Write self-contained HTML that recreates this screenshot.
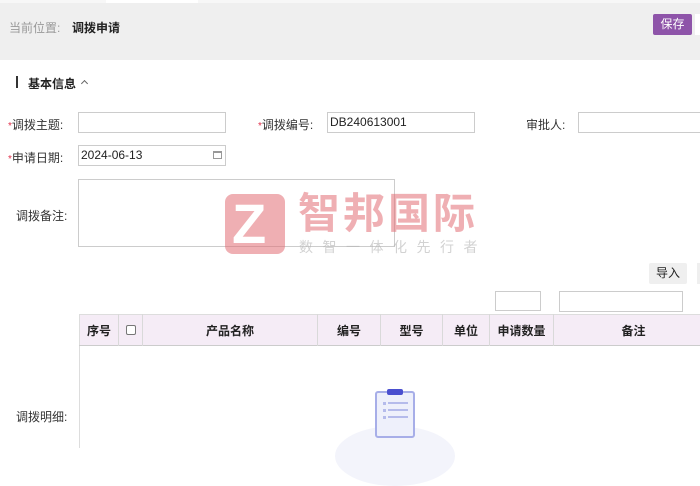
<!DOCTYPE html>
<html><head><meta charset="utf-8"><style>
*{margin:0;padding:0;box-sizing:border-box}
body{width:700px;height:448px;overflow:hidden;background:#fff;font-family:"Liberation Sans","Noto Sans CJK SC",sans-serif;font-size:12px;color:#333;position:relative}
.a{position:absolute}
.inp{position:absolute;border:1px solid #ccc;background:#fff;height:21px}
.lbl{position:absolute;font-size:12px;color:#333}
.star{color:#e0304a;font-size:10px}
table{table-layout:fixed}
th{font-weight:bold;font-size:12px;color:#222;border-right:1px solid #d9d9d9;height:31px;padding:0}
</style></head><body>
<div class="a" style="left:0;top:0;width:700px;height:60px;background:#efefef"></div>
<div class="a" style="left:0;top:0;width:700px;height:3px;background:#f7f7f7"></div>
<div class="a" style="left:106px;top:0;width:92px;height:3px;background:#fff"></div>
<div class="a" style="left:9px;top:19px;font-size:12px;color:#999">当前位置:</div>
<div class="a" style="left:72px;top:19px;font-size:12px;font-weight:bold;color:#222">调拨申请</div>
<div class="a" style="left:653px;top:14px;width:39px;height:21px;background:#8e54a9;border-radius:2px;color:#fff;text-align:center;line-height:21px;font-size:12px">保存</div>
<div class="a" style="left:695px;top:14px;width:5px;height:21px;background:#fff"></div>

<div class="a" style="left:16px;top:76px;width:2px;height:12px;background:#333"></div>
<div class="a" style="left:28px;top:75px;font-weight:bold;font-size:12px;color:#222">基本信息</div>
<div class="a" style="left:82px;top:81px;width:5px;height:5px;border-left:1px solid #666;border-top:1px solid #666;transform:rotate(45deg)"></div>

<div class="lbl" style="left:8px;top:116px"><span class="star">*</span>调拨主题:</div>
<div class="inp" style="left:78px;top:112px;width:148px"></div>
<div class="lbl" style="left:258px;top:116px"><span class="star">*</span>调拨编号:</div>
<div class="inp" style="left:327px;top:112px;width:148px;padding-left:2px;line-height:19px;font-size:12px;color:#222">DB240613001</div>
<div class="lbl" style="left:526px;top:116px">审批人:</div>
<div class="inp" style="left:578px;top:112px;width:130px"></div>

<div class="lbl" style="left:8px;top:149px"><span class="star">*</span>申请日期:</div>
<div class="inp" style="left:78px;top:145px;width:148px;padding-left:2px;line-height:19px;color:#222">2024-06-13</div>
<div class="a" style="left:213px;top:151px;width:9px;height:8px;border:1px solid #999;border-top-width:2px"></div>

<div class="lbl" style="left:16px;top:207px">调拨备注:</div>
<div class="inp" style="left:78px;top:179px;width:317px;height:68px"></div>

<div class="a" style="left:225px;top:194px;width:60px;height:60px;background:rgba(226,110,116,.55);border-radius:8px"></div>
<div class="a" style="left:232px;top:196px;font-size:56px;font-weight:bold;color:#fff;line-height:56px;font-family:'Liberation Sans',sans-serif">Z</div>
<div class="a" style="left:298px;top:190px;font-size:42px;font-weight:bold;color:rgba(226,110,116,.55);letter-spacing:3px;line-height:48px">智邦国际</div>
<div class="a" style="left:299px;top:239px;font-size:14px;color:rgba(180,180,180,.6);letter-spacing:9.5px;line-height:16px">数智一体化先行者</div>

<div class="a" style="left:649px;top:263px;width:38px;height:21px;background:#efefef;border-radius:2px;text-align:center;line-height:21px;color:#222">导入</div>
<div class="a" style="left:697px;top:263px;width:3px;height:21px;background:#efefef"></div>
<div class="inp" style="left:495px;top:291px;width:46px;height:20px"></div>
<div class="inp" style="left:559px;top:291px;width:124px;height:21px"></div>

<table class="a" style="left:79px;top:314px;width:634px;border-collapse:collapse;background:#f5ecf6;border-top:1px solid #ddd;border-bottom:1px solid #ccc;border-left:1px solid #ddd">
<colgroup><col style="width:39px"><col style="width:24px"><col style="width:175px"><col style="width:63px"><col style="width:62px"><col style="width:47px"><col style="width:64px"><col style="width:160px"></colgroup>
<tr>
<th>序号</th>
<th><div style="width:10px;height:10px;border:1px solid #777;border-radius:2px;margin:auto;background:#fff"></div></th>
<th>产品名称</th>
<th>编号</th>
<th>型号</th>
<th>单位</th>
<th>申请数量</th>
<th>备注</th>
</tr></table>
<div class="a" style="left:79px;top:346px;width:1px;height:102px;background:#ddd"></div>
<div class="lbl" style="left:16px;top:408px">调拨明细:</div>

<div class="a" style="left:335px;top:426px;width:120px;height:60px;border-radius:50%;background:#f3f4fb"></div>
<div class="a" style="left:375px;top:391px;width:40px;height:47px;background:#eef0fb;border:2px solid #a7aee8;border-radius:3px"></div>
<div class="a" style="left:387px;top:389px;width:16px;height:6px;background:#4a4fcf;border-radius:2px"></div>
<div class="a" style="left:383px;top:402px;width:3px;height:3px;background:#b5bbeb"></div>
<div class="a" style="left:388px;top:402px;width:20px;height:2px;background:#b5bbeb"></div>
<div class="a" style="left:383px;top:409px;width:3px;height:3px;background:#b5bbeb"></div>
<div class="a" style="left:388px;top:409px;width:20px;height:2px;background:#b5bbeb"></div>
<div class="a" style="left:383px;top:416px;width:3px;height:3px;background:#b5bbeb"></div>
<div class="a" style="left:388px;top:416px;width:20px;height:2px;background:#b5bbeb"></div>
</body></html>
